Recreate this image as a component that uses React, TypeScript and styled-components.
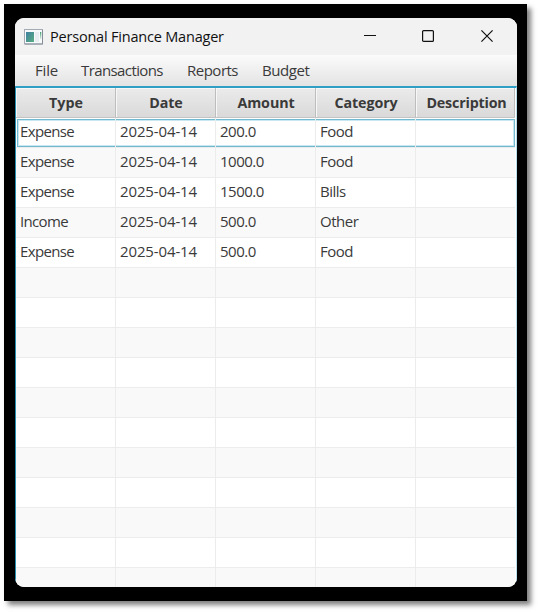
import React from "react";
import styled, { createGlobalStyle } from "styled-components";

const GlobalStyle = createGlobalStyle`
  * { box-sizing: border-box; }
  html, body { margin: 0; background: #fff; overflow: hidden; }
  body { font-family: "Open Sans", "Noto Sans", sans-serif; font-size: 15px; color: #3a3a3a; }
`;

const Page = styled.div`
  width: 538px;
  height: 612px;
  padding: 4px;
`;

const Backdrop = styled.div`
  width: 523px;
  height: 597px;
  padding: 14px 10px 14px 11px;
  background: #000;
  box-shadow: 4px 4px 5px rgba(0, 0, 0, 0.5);
`;

const Window = styled.div`
  display: flex;
  flex-direction: column;
  width: 502px;
  height: 569px;
  border-radius: 9px;
  overflow: hidden;
  background: #fff;
`;

const TitleBar = styled.header`
  display: flex;
  align-items: center;
  flex: 0 0 37px;
  padding: 0 1px 0 9px;
  background: #f2f2f2;
  color: #111;
`;

const Title = styled.span<{ $spacing: number }>`
  flex: 1;
  margin-left: 7px;
  padding-top: 1px;
  font-size: 14.5px;
  line-height: 20px;
  white-space: nowrap;
  letter-spacing: ${(p) => p.$spacing}px;
`;

const Controls = styled.div`
  display: flex;
  height: 37px;
  padding-bottom: 1px;
`;

const ControlButton = styled.button`
  display: flex;
  align-items: center;
  justify-content: center;
  width: 58.5px;
  padding: 0;
  border: 0;
  background: none;
`;

const MenuBar = styled.nav`
  display: flex;
  flex: 0 0 31px;
  padding-left: 20px;
  background: linear-gradient(#fbfbfb, #e3e3e3);
`;

const MenuItem = styled.span<{ $width: number; $spacing: number }>`
  width: ${(p) => p.$width}px;
  line-height: 30px;
  white-space: nowrap;
  letter-spacing: ${(p) => p.$spacing}px;
`;

const Table = styled.section`
  flex: 1;
  min-height: 0;
  overflow: hidden;
  border-top: 2px solid #2f9fc6;
  border-left: 1px solid #258fb0;
  border-right: 1px solid #b9dfec;
  padding-right: 1px;
`;

const HeaderRow = styled.div`
  display: flex;
  height: 30px;
  background: linear-gradient(#ebebeb, #d9d9d9);
  border-bottom: 1px solid #c4c4c4;
  box-shadow: inset 0 1px #f7f7f7;
`;

const HeaderCell = styled.div<{ $spacing: number }>`
  flex: 0 0 100px;
  padding-left: 1px;
  border-right: 1px solid #bdbdbd;
  box-shadow: inset 1px 1px #f7f7f7;
  text-align: center;
  font-weight: 700;
  font-size: 14.3px;
  line-height: 30px;
  white-space: nowrap;
  letter-spacing: ${(p) => p.$spacing}px;
  &:last-child { flex-basis: 99px; padding-left: 3px; }
`;

const Row = styled.div<{ $striped: boolean; $focused?: boolean }>`
  position: relative;
  display: flex;
  height: 30px;
  background: ${(p) => (p.$striped ? "#f9f9f9" : "#fff")};
  border-bottom: 1px solid #ececec;
  ${(p) =>
    p.$focused &&
    `&::before {
      content: "";
      position: absolute;
      inset: 1px 0 0 1px;
      border: 1px solid #70b9cf;
      box-shadow: inset 0 0 0 1px #c9e7f0;
      pointer-events: none;
    }`}
`;

const Cell = styled.div<{ $spacing: number }>`
  position: relative;
  flex: 0 0 100px;
  padding-left: 4px;
  border-right: 1px solid #ececec;
  line-height: 26px;
  white-space: nowrap;
  letter-spacing: ${(p) => p.$spacing}px;
  &:last-child { flex-basis: 99px; border-right: 0; }
`;

const menus = [
  { label: "File", width: 46, spacing: -0.2 },
  { label: "Transactions", width: 106, spacing: -0.6 },
  { label: "Reports", width: 75, spacing: -0.5 },
  { label: "Budget", width: 60, spacing: -0.45 },
];

const columns = [
  { label: "Type", spacing: 0 },
  { label: "Date", spacing: -0.1 },
  { label: "Amount", spacing: -0.1 },
  { label: "Category", spacing: -0.1 },
  { label: "Description", spacing: -0.2 },
];

const records = [
  ["Expense", "2025-04-14", "200.0", "Food", ""],
  ["Expense", "2025-04-14", "1000.0", "Food", ""],
  ["Expense", "2025-04-14", "1500.0", "Bills", ""],
  ["Income", "2025-04-14", "500.0", "Other", ""],
  ["Expense", "2025-04-14", "500.0", "Food", ""],
];
const emptyRecord = ["", "", "", "", ""];
const rows = Array.from({ length: 16 }, (_, i) => records[i] ?? emptyRecord);
const cellSpacing = [-0.65, -0.13, -0.5, -0.5, 0];

function AppIcon() {
  return (
    <svg width="19" height="16" viewBox="0 0 19 16">
      <defs>
        <linearGradient id="screen" x1="0" y1="0" x2="1" y2="1">
          <stop stopColor="#4080a0" />
          <stop offset="1" stopColor="#58ad83" />
        </linearGradient>
        <linearGradient id="meter" x1="0" y1="0" x2="0" y2="1">
          <stop stopColor="#459d72" />
          <stop offset="1" stopColor="#d8ede2" />
        </linearGradient>
      </defs>
      <rect x="0.5" y="0.5" width="18" height="14.5" fill="#f7f9fa" stroke="#a3aab3" />
      <path d="M1 15H18.5V1" fill="none" stroke="#858e98" />
      <rect x="2" y="3" width="8" height="10" fill="url(#screen)" />
      <rect x="11" y="3" width="4" height="10" fill="#e7edf1" />
      <rect x="16" y="3" width="1.3" height="7" fill="url(#meter)" />
    </svg>
  );
}

export default function App() {
  return (
    <>
      <GlobalStyle />
      <Page>
        <Backdrop>
          <Window>
            <TitleBar>
              <AppIcon />
              <Title $spacing={-0.2}>Personal Finance Manager</Title>
              <Controls>
                <ControlButton aria-label="Minimize">
                  <svg width="12" height="12" stroke="#111" fill="none"><path d="M0 5.5H12" /></svg>
                </ControlButton>
                <ControlButton aria-label="Maximize">
                  <svg width="12" height="12" stroke="#111" strokeWidth="1.2" fill="none"><rect x="0.6" y="0.6" width="10.8" height="10.8" rx="1" /></svg>
                </ControlButton>
                <ControlButton aria-label="Close">
                  <svg width="12" height="12" stroke="#111" strokeWidth="1.2" fill="none"><path d="M0.4 0.4 11.6 11.6M11.6 0.4 0.4 11.6" /></svg>
                </ControlButton>
              </Controls>
            </TitleBar>
            <MenuBar>
              {menus.map((m) => (
                <MenuItem key={m.label} $width={m.width} $spacing={m.spacing}>{m.label}</MenuItem>
              ))}
            </MenuBar>
            <Table>
              <HeaderRow>
                {columns.map((c) => (
                  <HeaderCell key={c.label} $spacing={c.spacing}>{c.label}</HeaderCell>
                ))}
              </HeaderRow>
              {rows.map((r, i) => (
                <Row key={i} $striped={i % 2 === 1} $focused={i === 0}>
                  {r.map((value, c) => (
                    <Cell key={c} $spacing={cellSpacing[c]}>{value}</Cell>
                  ))}
                </Row>
              ))}
            </Table>
          </Window>
        </Backdrop>
      </Page>
    </>
  );
}
